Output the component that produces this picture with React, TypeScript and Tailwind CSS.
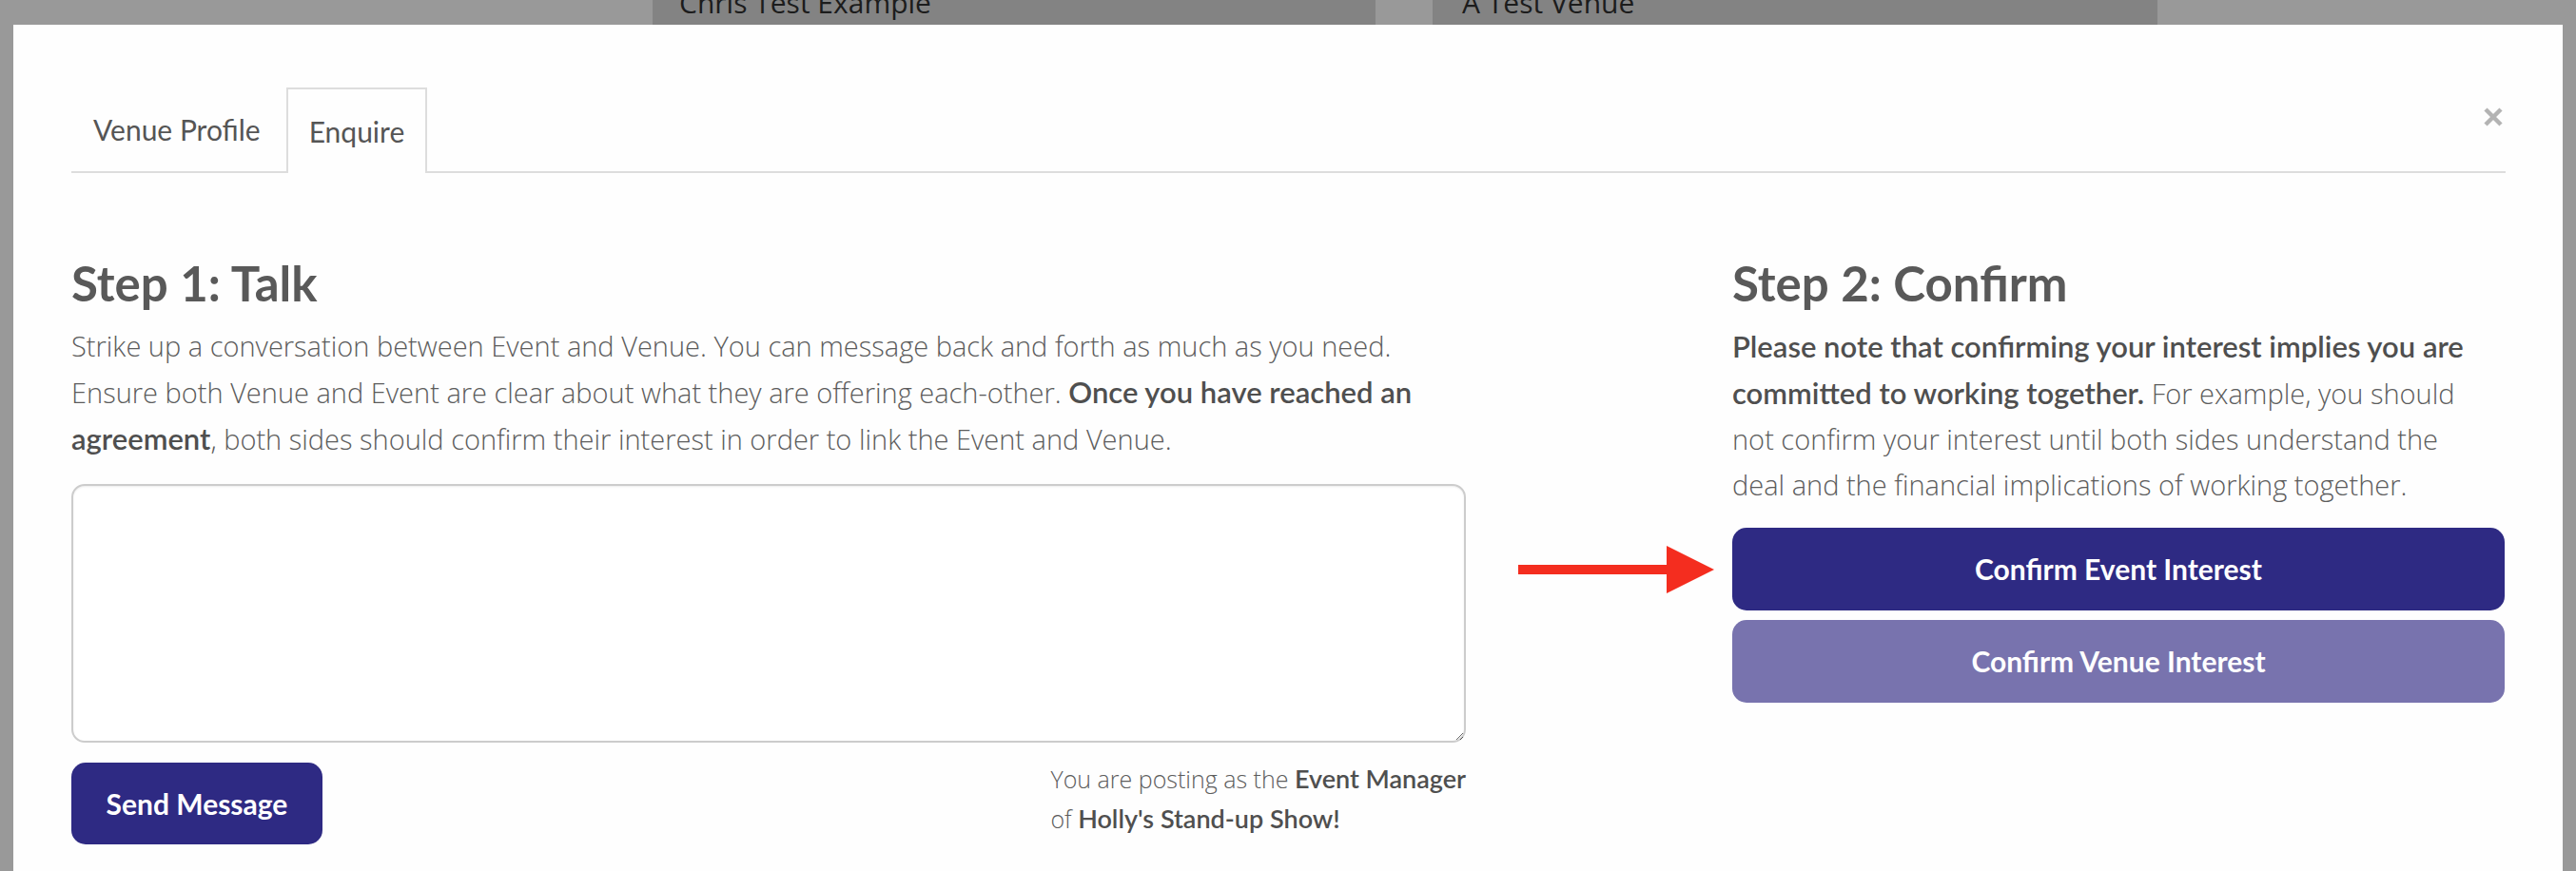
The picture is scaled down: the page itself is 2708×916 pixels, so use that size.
import React from "react";

const lato = { fontFamily: "Lato, 'Open Sans', sans-serif" };
const os = { fontFamily: "'Open Sans', Lato, sans-serif" };

function B({ children }: { children: React.ReactNode }) {
  return (
    <span className="font-semibold text-[#4f4f4f] text-[31px]" style={lato}>
      {children}
    </span>
  );
}

export default function App() {
  return (
    <div className="w-[2708px] h-[916px] bg-[#999999] overflow-hidden flex flex-col" style={lato}>
      {/* background page peeking at the top */}
      <div className="h-[26px] shrink-0 flex overflow-hidden">
        <div className="w-[686px] shrink-0" />
        <div className="w-[760px] shrink-0 bg-[#838383] pl-[28px]">
          <div className="mt-[-12px] text-[30px] leading-[30px] text-[#1c1c1c] whitespace-nowrap" style={os}>Chris Test Example</div>
        </div>
        <div className="w-[60px] shrink-0" />
        <div className="w-[762px] shrink-0 bg-[#838383] pl-[31px]">
          <div className="mt-[-12px] text-[30px] leading-[30px] text-[#1c1c1c] whitespace-nowrap" style={os}>A Test Venue</div>
        </div>
      </div>

      {/* modal */}
      <div className="mx-[14px] flex-1 bg-[#fefefe] pt-[66px] pl-[61px] pr-[60px]">
        {/* tabs */}
        <div className="flex items-start border-b-2 border-[#dddddd]">
          <div className="px-[22px] h-[88px] flex items-center text-[30px] text-[#555555] border border-transparent">
            Venue Profile
          </div>
          <div className="ml-[4px] px-[22px] h-[90px] mb-[-2px] flex items-center text-[30px] text-[#555555] bg-[#fefefe] border-2 border-b-0 border-[#dddddd]">
            Enquire
          </div>
          <div className="ml-auto mt-[21px] mr-[2px]">
            <svg width="22" height="20" viewBox="0 0 22 20">
              <path d="M3 2 L19 18 M19 2 L3 18" stroke="#b3b3b3" strokeWidth="4.5" strokeLinecap="butt" />
            </svg>
          </div>
        </div>

        <div className="flex items-start pt-[90px]">
          {/* left column */}
          <div className="w-[1466px] shrink-0">
            <h2 className="text-[51px] leading-[51px] font-bold text-[#595959]">Step 1: Talk</h2>
            <p className="mt-[17px] text-[29px] leading-[48px] font-light text-[#5c5c5c] whitespace-nowrap" style={os}>
              Strike up a conversation between Event and Venue. You can message back and forth as much as you need.
              <br />
              Ensure both Venue and Event are clear about what they are offering each-other. <B>Once you have reached an</B>
              <br />
              <B>agreement</B>, both sides should confirm their interest in order to link the Event and Venue.
            </p>
            <textarea className="mt-[23px] block w-[1466px] h-[272px] rounded-[14px] border-2 border-[#cccccc] bg-white shadow-[inset_0_1px_2px_rgba(0,0,0,0.08)] outline-none" />
            <div className="mt-[21px] flex items-start justify-between">
              <button className="w-[264px] h-[86px] rounded-[15px] bg-[#2e2a83] text-white text-[30px] font-bold">
                Send Message
              </button>
              <div className="mt-[-4px] text-[25px] leading-[42px] font-light text-[#5c5c5c] whitespace-nowrap" style={os}>
                You are posting as the{" "}
                <span className="font-semibold text-[#4f4f4f] text-[27px]" style={lato}>Event Manager</span>
                <br />
                of <span className="font-semibold text-[#4f4f4f] text-[27px]" style={lato}>Holly's Stand-up Show!</span>
              </div>
            </div>
          </div>

          {/* arrow */}
          <div className="w-[280px] shrink-0 pl-[55px] pt-[302px]">
            <svg width="206" height="50" viewBox="0 0 206 50">
              <rect x="0" y="20" width="158" height="10" fill="#f42d1f" />
              <polygon points="156,0 206,25 156,50" fill="#f42d1f" />
            </svg>
          </div>

          {/* right column */}
          <div className="w-[812px] shrink-0">
            <h2 className="text-[51px] leading-[51px] font-bold text-[#595959]">Step 2: Confirm</h2>
            <p className="mt-[17px] text-[29px] leading-[48px] font-light text-[#5c5c5c] whitespace-nowrap" style={os}>
              <B>Please note that confirming your interest implies you are</B>
              <br />
              <B>committed to working together.</B> For example, you should
              <br />
              not confirm your interest until both sides understand the
              <br />
              deal and the financial implications of working together.
            </p>
            <div className="mt-[21px] flex flex-col gap-[10px]">
              <button className="h-[87px] rounded-[15px] bg-[#2e2a83] text-white text-[30px] font-bold">
                Confirm Event Interest
              </button>
              <button className="h-[87px] rounded-[15px] bg-[#7873ae] text-white text-[30px] font-bold">
                Confirm Venue Interest
              </button>
            </div>
          </div>
        </div>
      </div>
    </div>
  );
}
